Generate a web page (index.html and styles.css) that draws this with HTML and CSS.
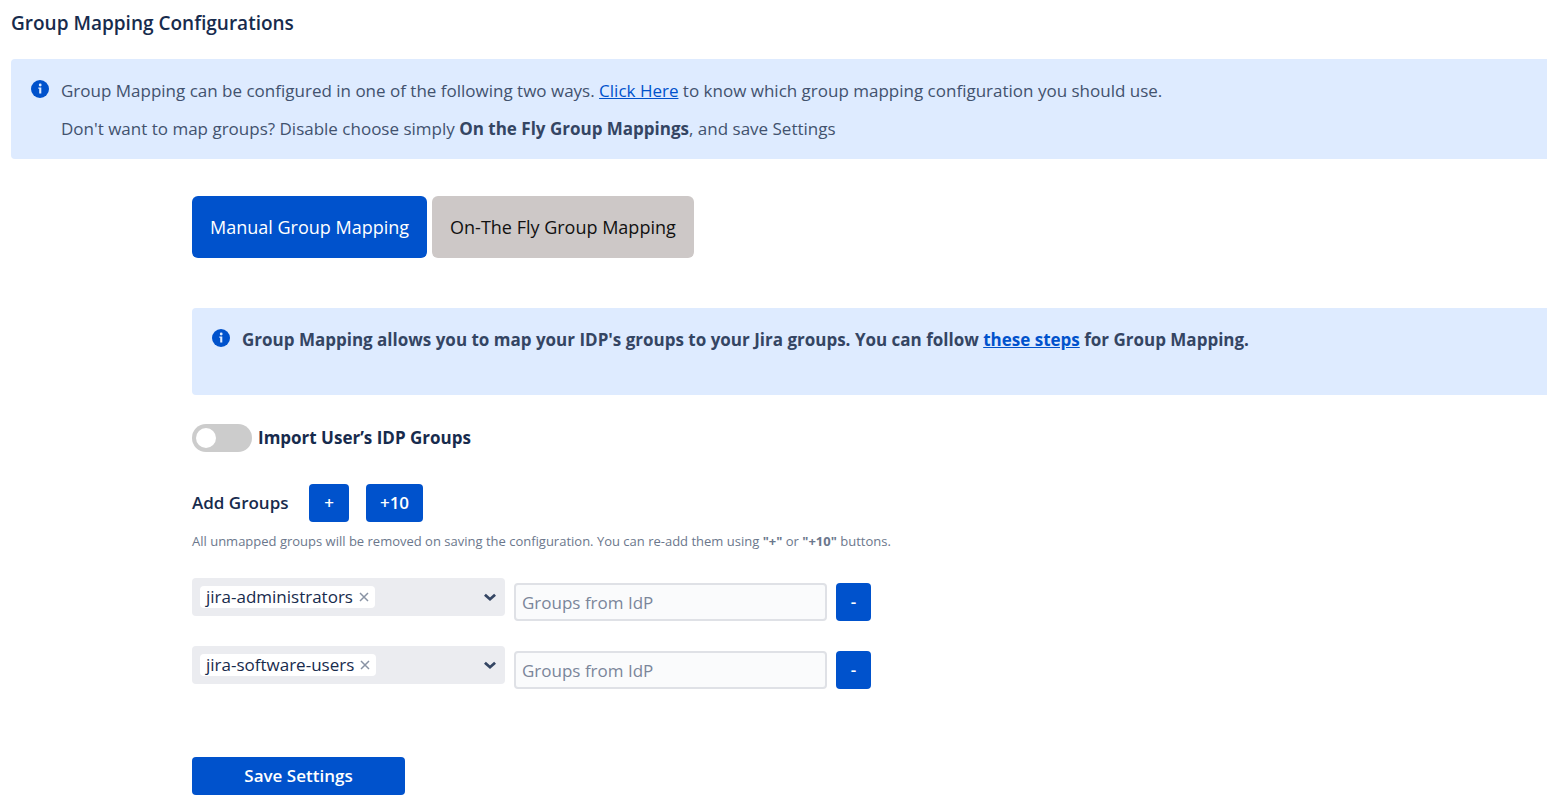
FILE: index.html
```html
<!DOCTYPE html>
<html lang="en">
<head>
<meta charset="utf-8">
<title>Group Mapping Configurations</title>
<link rel="stylesheet" href="styles.css">
</head>
<body>
<main class="page">
  <h1 class="title">Group Mapping Configurations</h1>

  <section class="notice">
    <svg class="info" viewBox="0 0 18 18" aria-hidden="true"><circle cx="9" cy="9" r="9" fill="#0052cc"/><circle cx="9.200" cy="5" r="1.400" fill="#deebff"/><path d="M7.300 7.600h3v5.900H8.200V8.800h-.9z" fill="#deebff"/></svg>
    <div class="notice-body">
      <p>Group Mapping can be configured in one of the following two ways. <a href="#">Click Here</a> to know which group mapping configuration you should use.</p>
      <p>Don't want to map groups? Disable choose simply <strong>On the Fly Group Mappings</strong>, and save Settings</p>
    </div>
  </section>

  <div class="content">
    <div class="tabs">
      <button type="button" class="tab tab-active">Manual Group Mapping</button>
      <button type="button" class="tab">On-The Fly Group Mapping</button>
    </div>

    <section class="notice notice-steps">
      <svg class="info" viewBox="0 0 18 18" aria-hidden="true"><circle cx="9" cy="9" r="9" fill="#0052cc"/><circle cx="9.200" cy="5" r="1.400" fill="#deebff"/><path d="M7.300 7.600h3v5.900H8.200V8.800h-.9z" fill="#deebff"/></svg>
      <p>Group Mapping allows you to map your IDP's groups to your Jira groups. You can follow <a href="#">these steps</a> for Group Mapping.</p>
    </section>

    <form class="form">
      <div class="switch-row">
        <input type="checkbox" class="switch" id="import-groups">
        <label for="import-groups">Import User’s IDP Groups</label>
      </div>

      <div class="add-row">
        <span class="add-label">Add Groups</span>
        <button type="button" class="btn btn-one">+</button>
        <button type="button" class="btn btn-ten">+10</button>
      </div>
      <p class="hint">All unmapped groups will be removed on saving the configuration. You can re-add them using <strong>"+"</strong> or <strong>"+10"</strong> buttons.</p>

      <div class="mapping">
        <div class="picker">
          <span class="tag">jira-administrators
            <button type="button" class="remove" aria-label="Remove jira-administrators"><svg viewBox="0 0 10 10"><path d="M1 1l8 8M9 1l-8 8"/></svg></button>
          </span>
          <button type="button" class="caret" aria-label="Choose Jira group"><svg viewBox="0 0 12 8"><path d="M1.5 1.5L6 5.5l4.500-4"/></svg></button>
        </div>
        <input type="text" class="field" placeholder="Groups from IdP" aria-label="Groups from IdP">
        <button type="button" class="btn btn-minus" aria-label="Remove mapping">-</button>
      </div>
      <div class="mapping">
        <div class="picker">
          <span class="tag">jira-software-users
            <button type="button" class="remove" aria-label="Remove jira-software-users"><svg viewBox="0 0 10 10"><path d="M1 1l8 8M9 1l-8 8"/></svg></button>
          </span>
          <button type="button" class="caret" aria-label="Choose Jira group"><svg viewBox="0 0 12 8"><path d="M1.5 1.5L6 5.5l4.500-4"/></svg></button>
        </div>
        <input type="text" class="field" placeholder="Groups from IdP" aria-label="Groups from IdP">
        <button type="button" class="btn btn-minus" aria-label="Remove mapping">-</button>
      </div>

      <button type="button" class="btn btn-save">Save Settings</button>
    </form>
  </div>
</main>
</body>
</html>
```
FILE: styles.css
```css
* { box-sizing: border-box; }
body {
  margin: 0;
  background: #fff;
  color: #172b4d;
  font-family: "Segoe UI", "Open Sans", "Noto Sans", sans-serif;
  font-size: 17px;
  line-height: 24px;
}
p, h1 { margin: 0; }
button, input { font: inherit; margin: 0; }
button { border: 0; padding: 0; cursor: pointer; }
a { color: #0052cc; text-decoration: underline; }

.page { padding: 11px 0 5px 11px; }
.title { font-size: 19px; font-weight: 600; line-height: 24px; margin-bottom: 24px; }

.notice {
  display: flex;
  align-items: flex-start;
  gap: 12px;
  padding: 20px 20px 18px;
  background: #deebff;
  border-radius: 4px 0 0 4px;
  color: #42526e;
}
.notice-body { display: grid; gap: 14px; }
.notice strong { color: #344563; }
.info { width: 18px; height: 18px; flex: none; margin-top: 1px; }
.notice-steps { color: #344563; font-weight: 700; padding-bottom: 43px; }

.content { padding-left: 181px; }
.tabs { display: flex; gap: 5px; margin: 37px 0 50px; }
.tab {
  padding: 19px 18px;
  border-radius: 6px;
  background: #cdc8c7;
  color: #111;
  font-size: 18px;
}
.tab-active { background: #0052cc; color: #fff; }

.switch-row { display: flex; align-items: center; gap: 6px; margin-top: 29px; font-weight: 700; }
.switch {
  appearance: none;
  width: 60px;
  height: 28px;
  border-radius: 14px;
  background: #ccc;
  padding: 4px;
}
.switch::before { content: ""; display: block; width: 20px; height: 20px; border-radius: 50%; background: #fff; }
.switch:checked { background: #0052cc; }
.switch:checked::before { margin-left: 32px; }

.add-row { display: flex; align-items: center; gap: 17px; margin-top: 32px; }
.add-label { font-weight: 600; min-width: 100px; }
.btn {
  height: 38px;
  border-radius: 4px;
  background: #0052cc;
  color: #fff;
  font-weight: 600;
}
.btn-one { width: 40px; }
.btn-ten { width: 57px; }
.btn-minus { width: 35px; }
.btn-save { width: 213px; margin-top: 68px; }
.hint { margin: 9px 0 27px; font-size: 13px; line-height: 20px; color: #6b778c; }

.mapping { display: flex; align-items: flex-end; gap: 9px; height: 43px; }
.mapping + .mapping { margin-top: 25px; }
.picker {
  display: flex;
  align-items: center;
  justify-content: space-between;
  align-self: flex-start;
  width: 313px;
  height: 38px;
  padding: 0 8px;
  border-radius: 4px;
  background: #ebecf0;
}
.tag {
  display: flex;
  align-items: center;
  gap: 6px;
  padding: 0 6px;
  border-radius: 4px;
  background: #fff;
  line-height: 22px;
}
.remove, .caret { display: flex; background: none; }
.remove svg { width: 10px; height: 10px; stroke: #8993a4; stroke-width: 1.500; fill: none; }
.caret svg { width: 14px; height: 9px; stroke: #344563; stroke-width: 2.500; fill: none; }
.field {
  width: 313px;
  height: 38px;
  padding: 0 6px;
  border: 2px solid #dfe1e6;
  border-radius: 4px;
  background: #fafbfc;
  color: #172b4d;
}
.field::placeholder { color: #7a869a; opacity: 1; }
```
